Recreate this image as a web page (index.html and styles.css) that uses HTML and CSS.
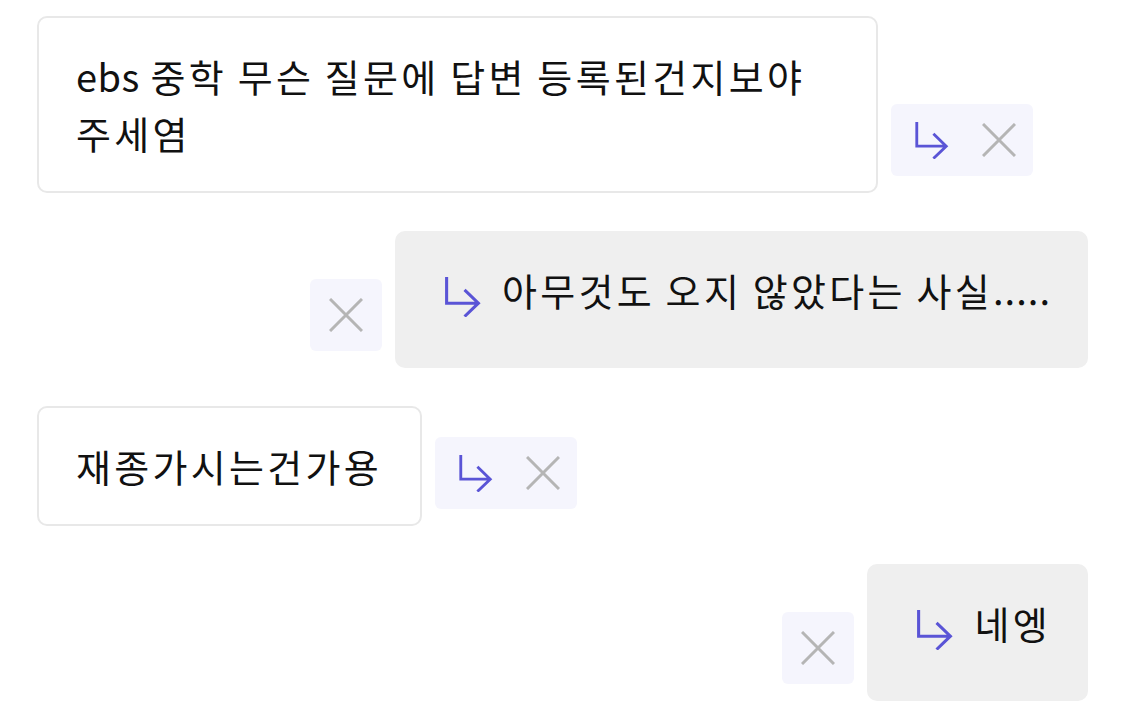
FILE: index.html
```html
<!DOCTYPE html>
<html lang="ko">
<head>
<meta charset="utf-8">
<link rel="stylesheet" href="styles.css">
</head>
<body>
<div class="thread">
  <div class="row row-left">
    <div class="bubble bubble-plain"><span class="latin">ebs</span> 중학 무슨 질문에 답변 등록된건지보야 주세염</div>
    <div class="chip">
      <svg class="ic-arrow" width="35" height="38" viewBox="0 0 36 40"><path d="M2.5 1 V26.5 H33.5 M20 13.5 L33.5 26.5 L20 39.5" /></svg>
      <svg class="ic-x" width="34" height="34" viewBox="0 0 34 34"><path d="M1 1 L33 33 M33 1 L1 33" /></svg>
    </div>
  </div>

  <div class="row row-right">
    <div class="chip chip-single">
      <svg class="ic-x" width="34" height="34" viewBox="0 0 34 34"><path d="M1 1 L33 33 M33 1 L1 33" /></svg>
    </div>
    <div class="bubble bubble-reply">
      <svg class="ic-arrow" width="37" height="41" viewBox="0 0 36 40"><path d="M2.5 1 V26.5 H33.5 M20 13.5 L33.5 26.5 L20 39.5" /></svg>
      <span>아무것도 오지 않았다는 사실<span class="ellipsis">.....</span></span>
    </div>
  </div>

  <div class="row row-left">
    <div class="bubble bubble-plain">재종가시는건가용</div>
    <div class="chip">
      <svg class="ic-arrow" width="35" height="38" viewBox="0 0 36 40"><path d="M2.5 1 V26.5 H33.5 M20 13.5 L33.5 26.5 L20 39.5" /></svg>
      <svg class="ic-x" width="34" height="34" viewBox="0 0 34 34"><path d="M1 1 L33 33 M33 1 L1 33" /></svg>
    </div>
  </div>

  <div class="row row-right">
    <div class="chip chip-single">
      <svg class="ic-x" width="34" height="34" viewBox="0 0 34 34"><path d="M1 1 L33 33 M33 1 L1 33" /></svg>
    </div>
    <div class="bubble bubble-reply">
      <svg class="ic-arrow" width="37" height="41" viewBox="0 0 36 40"><path d="M2.5 1 V26.5 H33.5 M20 13.5 L33.5 26.5 L20 39.5" /></svg>
      <span>네엥</span>
    </div>
  </div>
</div>
</body>
</html>
```

FILE: styles.css
```css
html, body {
  margin: 0;
  padding: 0;
  background: #ffffff;
}

body {
  font-family: "Noto Sans CJK KR", "Noto Sans", sans-serif;
  color: #111111;
}

.thread {
  display: flex;
  flex-direction: column;
  gap: 38px;
  padding: 16px 37px 0 37px;
}

.row {
  display: flex;
  align-items: flex-end;
  gap: 13px;
}

.row-right {
  justify-content: flex-end;
}

.bubble {
  font-size: 38px;
  line-height: 57px;
  letter-spacing: 3.3px;
  word-spacing: -3.3px;
  border-radius: 10px;
  box-sizing: border-box;
  max-width: 80%;
}

.latin {
  letter-spacing: 0.5px;
}

.ellipsis {
  letter-spacing: 1px;
}

.bubble-plain {
  background: #ffffff;
  border: 2px solid #e8e8e8;
  padding: 29px 38px 30px 37px;
}

.bubble-reply {
  background: #efefef;
  padding: 30px 37px 50px 49px;
  display: flex;
  align-items: flex-start;
  gap: 21px;
}

.bubble-reply .ic-arrow {
  margin-top: 15px;
}

.chip {
  flex: none;
  display: flex;
  align-items: center;
  height: 72px;
  padding: 0 17px 0 23px;
  gap: 33px;
  margin-bottom: 17px;
  background: #f5f5fd;
  border-radius: 6px;
  box-sizing: border-box;
}

.chip-single {
  padding: 0 19px;
}

.ic-arrow {
  flex: none;
  display: block;
  fill: none;
  stroke: #5a54d6;
  stroke-width: 3;
}

.ic-x {
  flex: none;
  display: block;
  fill: none;
  stroke: #b5b5b5;
  stroke-width: 3;
}
```
